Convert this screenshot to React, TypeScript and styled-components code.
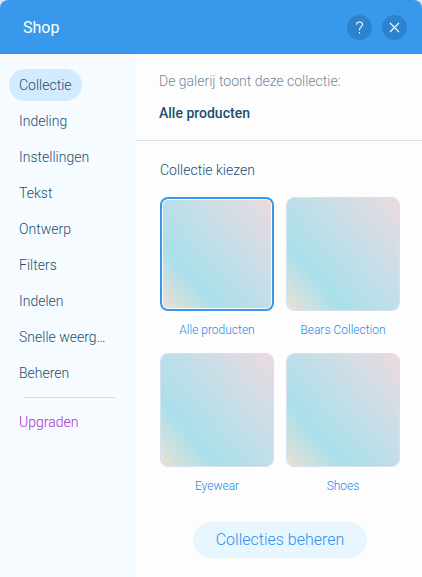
import React, { useState } from "react";
import styled, { createGlobalStyle } from "styled-components";

const GlobalStyle = createGlobalStyle`
  *, *::before, *::after { box-sizing: border-box; }
  body {
    margin: 0;
    background: #dfe3e6;
    font-family: Roboto, "Liberation Sans", sans-serif;
    font-weight: 300;
    font-size: 14px;
    line-height: 20px;
    color: #1d4f70;
  }
  button {
    font: inherit;
    color: inherit;
    border: 0;
    padding: 0;
    background: none;
    cursor: pointer;
  }
`;

const Panel = styled.div`
  display: flex;
  flex-direction: column;
  min-height: 100vh;
  background: #fdfdfd;
  border-radius: 8px 8px 0 0;
  overflow: hidden;
`;

const Header = styled.header`
  display: flex;
  align-items: center;
  gap: 10px;
  height: 54px;
  padding: 1px 15px 0 23px;
  background: #3899ec;
  color: #fff;
`;

const Title = styled.h1`
  flex: 1;
  margin: 0;
  font-size: 16px;
  font-weight: 400;
`;

const RoundButton = styled.button`
  display: grid;
  place-items: center;
  width: 25px;
  height: 25px;
  border-radius: 50%;
  background: #2d82cd;

  svg {
    display: block;
    fill: none;
    stroke: #fff;
    stroke-width: 1.1;
  }
`;

const Body = styled.div`
  flex: 1;
  display: flex;
`;

const Sidebar = styled.nav`
  flex: none;
  display: flex;
  flex-direction: column;
  align-items: flex-start;
  gap: 4px;
  width: 135px;
  padding: 15px 9px;
  background: #f5fbff;
`;

const Tab = styled.button<{ $active?: boolean; $accent?: boolean }>`
  height: 32px;
  padding: 0 10px;
  border-radius: 16px;
  white-space: nowrap;
  background: ${(p) => (p.$active ? "#d3ebff" : "transparent")};
  color: ${(p) => (p.$accent ? "#aa2ccb" : "inherit")};
`;

const Divider = styled.hr`
  width: 92px;
  height: 1px;
  margin: 4px 14px;
  border: 0;
  background: #d5dde4;
`;

const Content = styled.main`
  flex: 1;
  min-width: 0;
`;

const Summary = styled.section`
  display: flex;
  flex-direction: column;
  gap: 12px;
  padding: 17px 24px;
  border-bottom: 1px solid #d6e1ea;

  p { margin: 0; color: #7088a0; }
  strong { font-weight: 500; }
`;

const Picker = styled.section`
  display: flex;
  flex-direction: column;
  padding: 19px 22px 19px 25px;
`;

const Heading = styled.h2`
  margin: 0 0 17px;
  font-size: 14px;
  font-weight: 300;
`;

const Grid = styled.div`
  display: grid;
  grid-template-columns: 1fr 1fr;
  gap: 13px 12px;
`;

const Tile = styled.button`
  display: flex;
  flex-direction: column;
  gap: 9px;
  font-size: 12px;
  color: #1f88e5;
`;

const Swatch = styled.span<{ $selected: boolean }>`
  display: block;
  width: 100%;
  aspect-ratio: 1;
  padding: ${(p) => (p.$selected ? "1px" : "0")};
  border: ${(p) => (p.$selected ? "2px solid #3899ec" : "1px solid #d5e1ec")};
  border-radius: 8px;

  &::before {
    content: "";
    display: block;
    height: 100%;
    border-radius: ${(p) => (p.$selected ? "5px" : "7px")};
    background: linear-gradient(49deg, #ebe0d5 0%, #a9e0eb 27%, #cfdde6 70%, #ebdadf 100%);
  }
`;

const TileLabel = styled.span`
  width: 100%;
  text-align: center;
`;

const ManageButton = styled.button`
  align-self: center;
  height: 36px;
  margin-top: 26px;
  padding: 0 23px;
  border-radius: 18px;
  background: #e8f6ff;
  color: #2b90ea;
  font-size: 16px;
`;

const tabs = [
  "Collectie",
  "Indeling",
  "Instellingen",
  "Tekst",
  "Ontwerp",
  "Filters",
  "Indelen",
  "Snelle weerg…",
  "Beheren",
];

const collections = ["Alle producten", "Bears Collection", "Eyewear", "Shoes"];

export default function App() {
  const [tab, setTab] = useState(tabs[0]);
  const [selected, setSelected] = useState(collections[0]);

  return (
    <>
      <GlobalStyle />
      <Panel>
        <Header>
          <Title>Shop</Title>
          <RoundButton aria-label="Help">
            <svg width="9" height="13" viewBox="0 0 9 13">
              <path d="M1.5 3.8C1.5 1.8 2.7 1 4.5 1s3 .9 3 2.6c0 2.4-3 2.5-3 4.9v.8M4.5 11v1.4" />
            </svg>
          </RoundButton>
          <RoundButton aria-label="Sluiten">
            <svg width="11" height="11" viewBox="0 0 11 11">
              <path d="M1 1l9 9M10 1l-9 9" />
            </svg>
          </RoundButton>
        </Header>
        <Body>
          <Sidebar>
            {tabs.map((name) => (
              <Tab key={name} $active={name === tab} onClick={() => setTab(name)}>
                {name}
              </Tab>
            ))}
            <Divider />
            <Tab $accent>Upgraden</Tab>
          </Sidebar>
          <Content>
            <Summary>
              <p>De galerij toont deze collectie:</p>
              <strong>{selected}</strong>
            </Summary>
            <Picker>
              <Heading>Collectie kiezen</Heading>
              <Grid>
                {collections.map((name) => (
                  <Tile
                    key={name}
                    aria-pressed={name === selected}
                    onClick={() => setSelected(name)}
                  >
                    <Swatch $selected={name === selected} />
                    <TileLabel>{name}</TileLabel>
                  </Tile>
                ))}
              </Grid>
              <ManageButton>Collecties beheren</ManageButton>
            </Picker>
          </Content>
        </Body>
      </Panel>
    </>
  );
}
